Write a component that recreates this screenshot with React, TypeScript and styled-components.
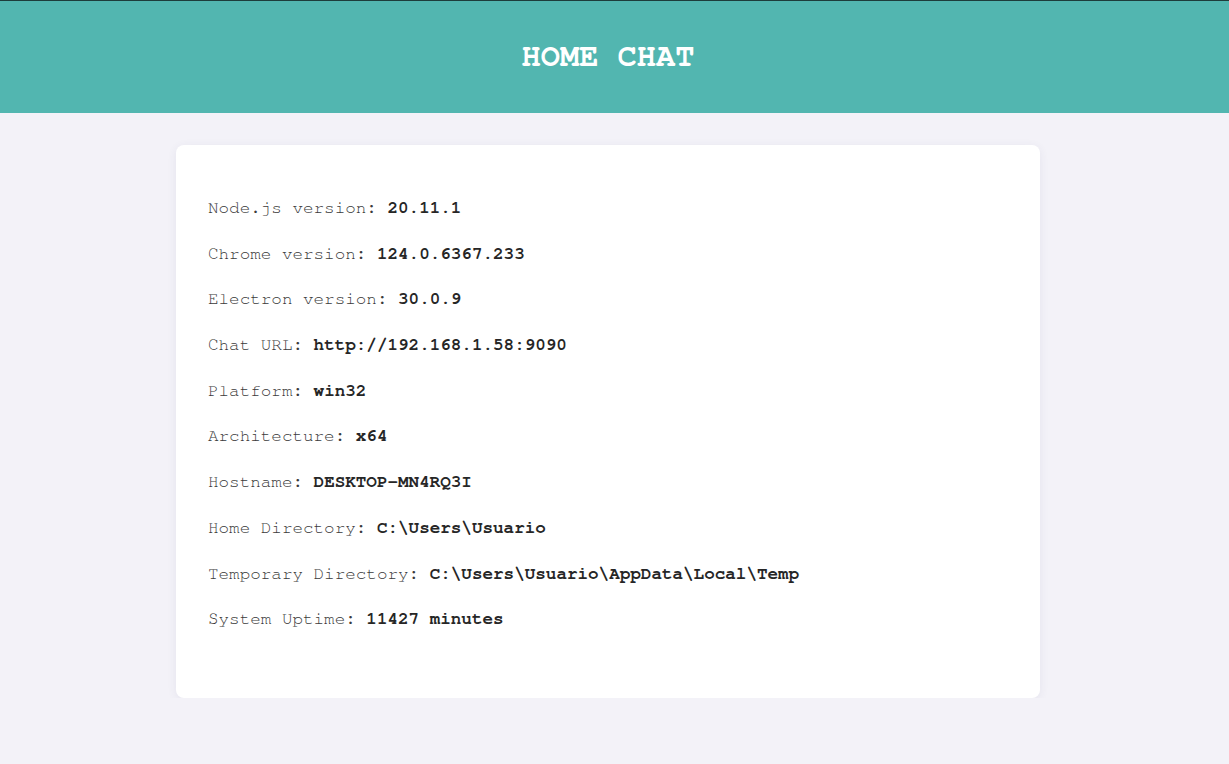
import React from "react";
import styled, { createGlobalStyle } from "styled-components";

const mono = `"Nimbus Mono PS", "Nimbus Mono L", "FreeMono", "Courier New", "Liberation Mono", monospace`;

const Global = createGlobalStyle`
  html, body { margin: 0; padding: 0; }
  body {
    background: #f3f2f8;
    font-family: ${mono};
  }
`;

const Header = styled.header`
  height: 112px;
  border-top: 1px solid #1d3d3b;
  background: #52b6b0;
  display: flex;
  align-items: center;
  justify-content: center;
  padding-right: 13px;
`;

const Title = styled.h1`
  margin: -2px 0 0;
  color: #ffffff;
  font-family: ${mono};
  font-weight: 700;
  font-size: 32px;
  line-height: 36px;
`;

const Main = styled.main`
  display: flex;
  justify-content: center;
  padding: 32px 13px 0 0;
`;

const Card = styled.section`
  width: 864px;
  box-sizing: border-box;
  background: #ffffff;
  border-radius: 8px;
  box-shadow: 0 2px 10px rgba(60, 60, 110, 0.08);
  padding: 53px 32px 69px;
  display: flex;
  flex-direction: column;
  gap: 25.7px;
`;

const Row = styled.p`
  margin: 0;
  font-size: 17.6px;
  line-height: 20px;
  color: #3a3a3a;
  white-space: pre;
`;

const Value = styled.strong`
  color: #262626;
  font-weight: 700;
`;

const rows: [string, string][] = [
  ["Node.js version", "20.11.1"],
  ["Chrome version", "124.0.6367.233"],
  ["Electron version", "30.0.9"],
  ["Chat URL", "http://192.168.1.58:9090"],
  ["Platform", "win32"],
  ["Architecture", "x64"],
  ["Hostname", "DESKTOP-MN4RQ3I"],
  ["Home Directory", "C:\\Users\\Usuario"],
  ["Temporary Directory", "C:\\Users\\Usuario\\AppData\\Local\\Temp"],
  ["System Uptime", "11427 minutes"],
];

export default function App() {
  return (
    <>
      <Global />
      <Header>
        <Title>HOME CHAT</Title>
      </Header>
      <Main>
        <Card>
          {rows.map(([k, v]) => (
            <Row key={k}>
              {k}: <Value>{v}</Value>
            </Row>
          ))}
        </Card>
      </Main>
    </>
  );
}
